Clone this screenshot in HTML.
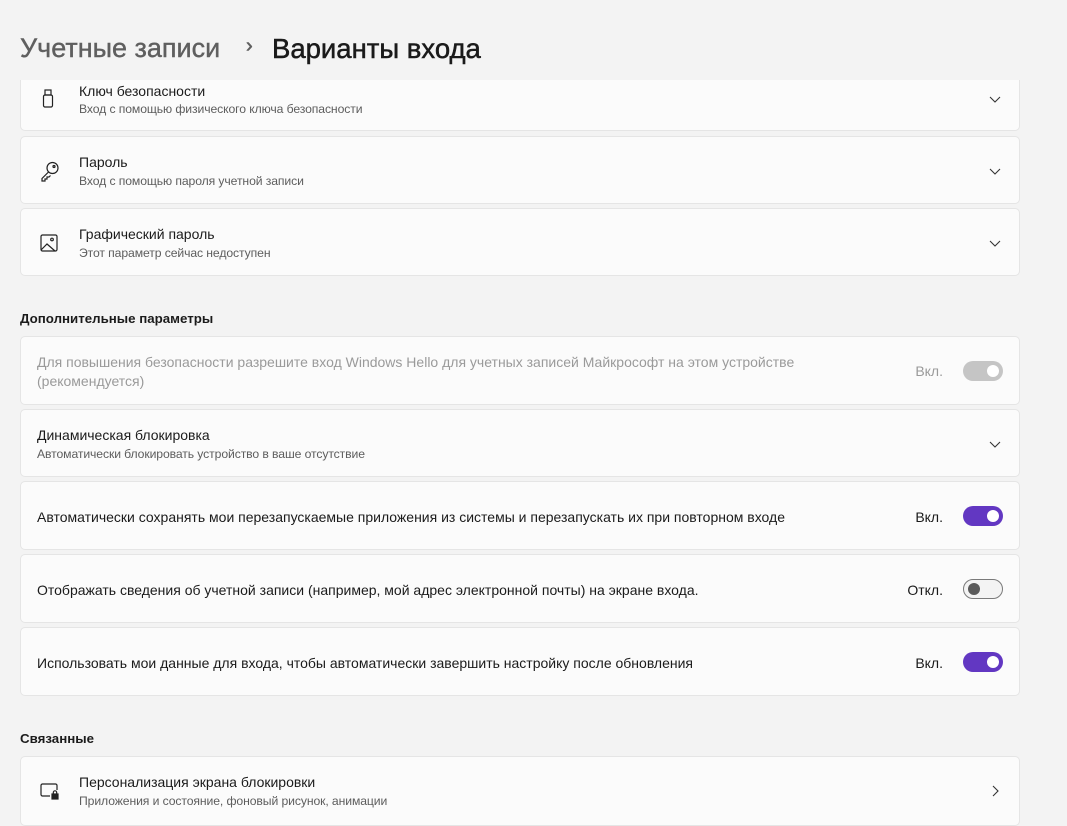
<!DOCTYPE html>
<html><head><meta charset="utf-8"><style>
*{box-sizing:border-box;margin:0;padding:0}
body{width:1067px;height:813px;overflow:hidden;background:#f3f3f3;font-family:"Liberation Sans","Noto Sans CJK SC",sans-serif;color:#1a1a1a;position:relative}
.card{position:absolute;left:20px;width:1000px;background:#fbfbfb;border:1px solid #e5e5e5;border-radius:5px}
.t{position:absolute;font-size:14px;color:#1b1b1b;white-space:nowrap}
.s{position:absolute;font-size:12.2px;color:#5d5d5d;white-space:nowrap;letter-spacing:-0.1px}
.chev{position:absolute;right:18px;width:12px;height:12px}
.lbl{position:absolute;right:76px;font-size:14px}
.tg{position:absolute;right:16px;width:40px;height:20px;border-radius:10px}
.tg i{position:absolute;width:12px;height:12px;border-radius:50%;top:4px}
.h{position:absolute;left:20px;font-size:13.3px;font-weight:bold;color:#1b1b1b}
.ic{position:absolute;left:18px}
</style></head><body>

<div class="card" style="top:60px;height:71px">
<svg class="ic" style="top:27px" width="20" height="22" viewBox="0 0 20 22" fill="none" stroke="#222" stroke-width="1.2"><rect x="6" y="2" width="6" height="5"/><rect x="4.5" y="7" width="9" height="12" rx="1.5"/></svg>
<div class="t" style="left:58px;top:22px">Ключ безопасности</div>
<div class="s" style="left:58px;top:41px">Вход с помощью физического ключа безопасности</div>
<svg class="chev" style="top:32px" viewBox="0 0 12 12"><path d="M1 4l5 5 5-5" fill="none" stroke="#333" stroke-width="1.1"/></svg>
</div>

<div class="card" style="top:136px;height:68px">
<svg class="ic" style="top:23px" width="22" height="22" viewBox="0 0 22 22" fill="none" stroke="#222" stroke-width="1.2"><circle cx="13.5" cy="8" r="5.5"/><circle cx="15" cy="6.5" r="1"/><path d="M9.5 12L3 18.5V21h3v-2h2v-2h2l1.5-1.5"/></svg>
<div class="t" style="left:58px;top:17px">Пароль</div>
<div class="s" style="left:58px;top:37px">Вход с помощью пароля учетной записи</div>
<svg class="chev" style="top:28px" viewBox="0 0 12 12"><path d="M1 4l5 5 5-5" fill="none" stroke="#333" stroke-width="1.1"/></svg>
</div>

<div class="card" style="top:208px;height:68px">
<svg class="ic" style="top:24px" width="20" height="20" viewBox="0 0 20 20" fill="none" stroke="#222" stroke-width="1.2"><rect x="2" y="2" width="16" height="16" rx="1.5"/><circle cx="13" cy="6.5" r="1.3"/><path d="M2 17l6-6 8 7"/></svg>
<div class="t" style="left:58px;top:17px">Графический пароль</div>
<div class="s" style="left:58px;top:37px">Этот параметр сейчас недоступен</div>
<svg class="chev" style="top:28px" viewBox="0 0 12 12"><path d="M1 4l5 5 5-5" fill="none" stroke="#333" stroke-width="1.1"/></svg>
</div>

<div style="position:absolute;left:0;top:0;width:1067px;height:80px;background:#f3f3f3"></div>
<div style="position:absolute;left:20px;top:33px;font-size:27px;color:#5f5f5f;white-space:nowrap;-webkit-text-stroke:0.4px #5f5f5f">Учетные записи</div>
<div style="position:absolute;left:246px;top:35px;font-size:20px;color:#5f5f5f;-webkit-text-stroke:0.6px #5f5f5f">›</div>
<div style="position:absolute;left:272px;top:33px;font-size:27.5px;color:#1a1a1a;white-space:nowrap;-webkit-text-stroke:0.5px #1a1a1a">Варианты входа</div>

<div class="h" style="top:311px">Дополнительные параметры</div>

<div class="card" style="top:336px;height:69px">
<div class="t" style="left:16px;top:17px;color:#9a9a9a">Для повышения безопасности разрешите вход Windows Hello для учетных записей Майкрософт на этом устройстве</div>
<div class="t" style="left:16px;top:36px;color:#9a9a9a">(рекомендуется)</div>
<div class="lbl" style="top:26px;color:#9a9a9a">Вкл.</div>
<div class="tg" style="top:24px;background:#c5c5c5"><i style="right:4px;top:4px;background:#fff"></i></div>
</div>

<div class="card" style="top:409px;height:68px">
<div class="t" style="left:16px;top:17px">Динамическая блокировка</div>
<div class="s" style="left:16px;top:37px">Автоматически блокировать устройство в ваше отсутствие</div>
<svg class="chev" style="top:28px" viewBox="0 0 12 12"><path d="M1 4l5 5 5-5" fill="none" stroke="#333" stroke-width="1.1"/></svg>
</div>

<div class="card" style="top:481px;height:69px">
<div class="t" style="left:16px;top:27px">Автоматически сохранять мои перезапускаемые приложения из системы и перезапускать их при повторном входе</div>
<div class="lbl" style="top:27px">Вкл.</div>
<div class="tg" style="top:24px;background:#6237c2"><i style="right:4px;background:#fff"></i></div>
</div>

<div class="card" style="top:554px;height:69px">
<div class="t" style="left:16px;top:27px">Отображать сведения об учетной записи (например, мой адрес электронной почты) на экране входа.</div>
<div class="lbl" style="top:27px">Откл.</div>
<div class="tg" style="top:24px;background:#f3f3f3;border:1px solid #7a7a7a"><i style="left:4px;top:3px;background:#5a5a5a"></i></div>
</div>

<div class="card" style="top:627px;height:69px">
<div class="t" style="left:16px;top:27px">Использовать мои данные для входа, чтобы автоматически завершить настройку после обновления</div>
<div class="lbl" style="top:27px">Вкл.</div>
<div class="tg" style="top:24px;background:#6237c2"><i style="right:4px;background:#fff"></i></div>
</div>

<div class="h" style="top:731px">Связанные</div>

<div class="card" style="top:756px;height:70px">
<svg class="ic" style="top:24px" width="22" height="20" viewBox="0 0 22 20" fill="none" stroke="#222" stroke-width="1.2"><path d="M11 15H3.5A1.5 1.5 0 0 1 2 13.5v-9A1.5 1.5 0 0 1 3.5 3h13A1.5 1.5 0 0 1 18 4.5V9"/><rect x="13" y="13" width="6" height="5" fill="#222"/><path d="M14.3 13v-1.5a1.7 1.7 0 0 1 3.4 0V13"/></svg>
<div class="t" style="left:58px;top:17px">Персонализация экрана блокировки</div>
<div class="s" style="left:58px;top:37px">Приложения и состояние, фоновый рисунок, анимации</div>
<svg class="chev" style="top:28px" viewBox="0 0 12 12"><path d="M4 1l5 5-5 5" fill="none" stroke="#333" stroke-width="1.1"/></svg>
</div>
</body></html>
